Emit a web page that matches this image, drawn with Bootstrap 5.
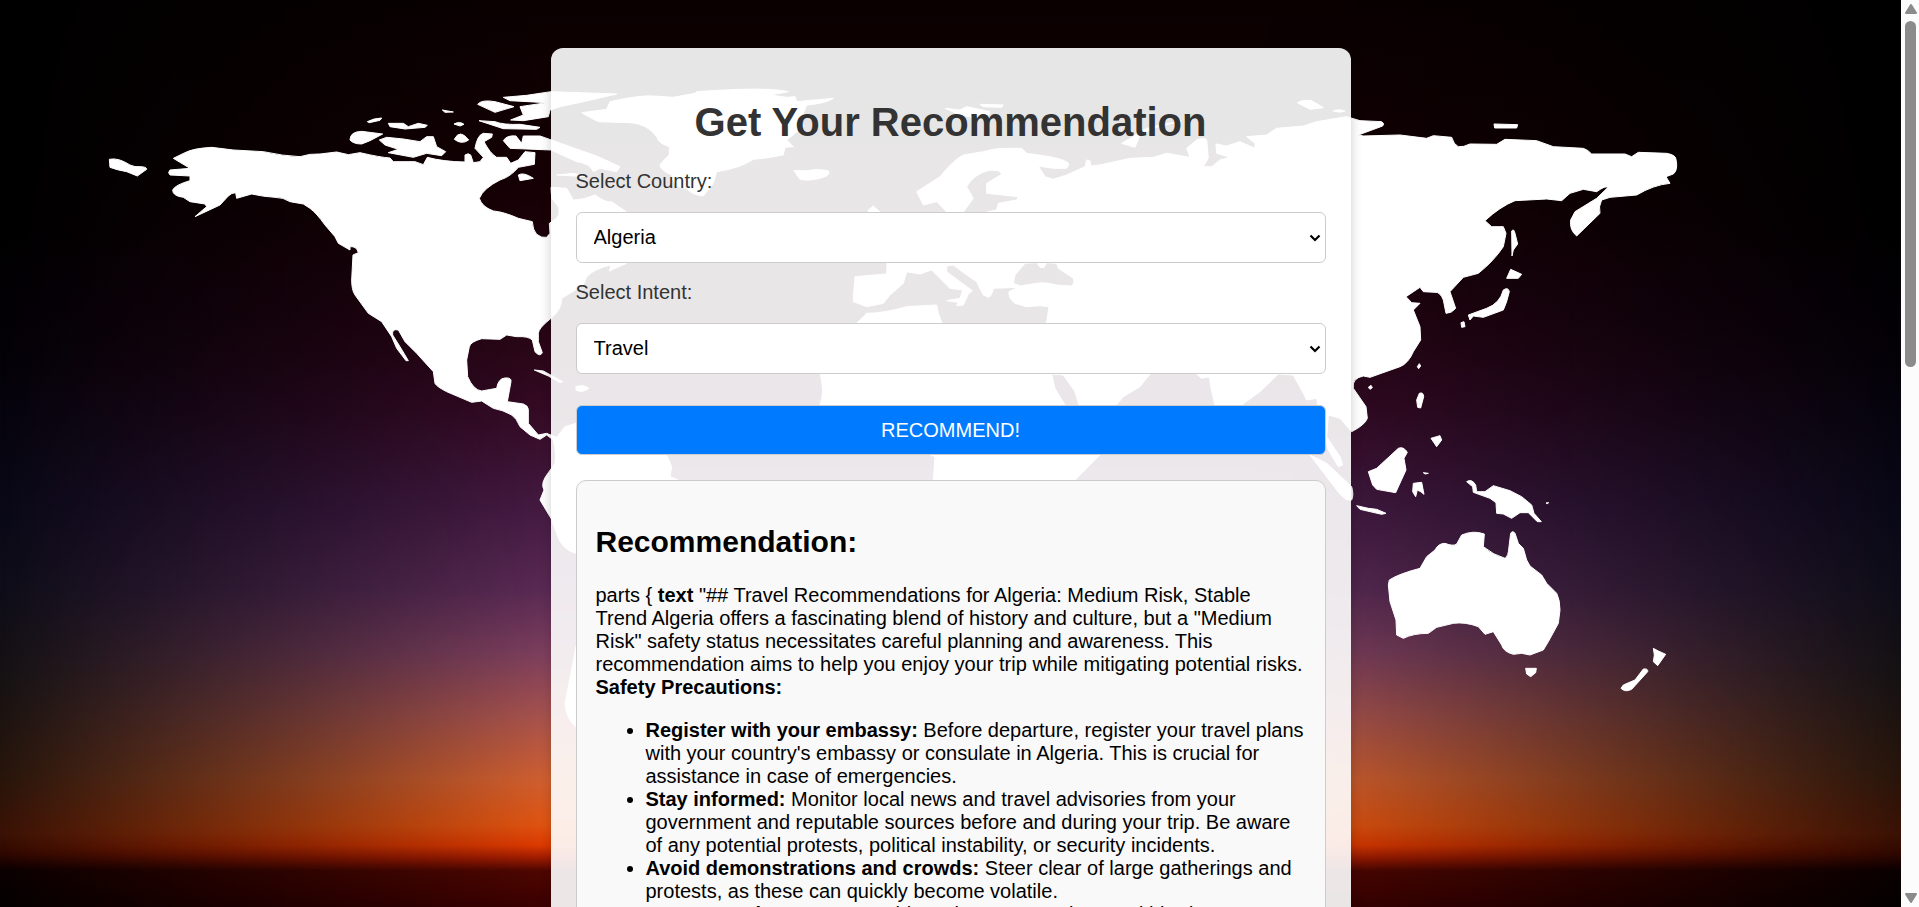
<!DOCTYPE html>
<html lang="en">
<head>
<meta charset="utf-8">
<meta name="viewport" content="width=device-width, initial-scale=1">
<title>Get Your Recommendation</title>
<link href="https://cdn.jsdelivr.net/npm/bootstrap@5.3.0/dist/css/bootstrap.min.css" rel="stylesheet">
<script src="https://cdn.jsdelivr.net/npm/bootstrap@5.3.0/dist/js/bootstrap.bundle.min.js"></script>
<style>
  body { font-family: "Liberation Sans", Arial, sans-serif; font-size: 20px; line-height: 23px; color: #000; background: #000; }
  .scroller { scrollbar-width: none; }
  .scroller::-webkit-scrollbar { display: none; }
  .panel { max-width: 800px; padding: 25px; background: rgba(255,255,255,.9); border-radius: 12px; box-shadow: 0 0 12px rgba(0,0,0,.2); }
  .panel h1 { font-size: 40px; line-height: 46px; font-weight: 700; color: #333; margin: 26px 0 25px; }
  .panel label { color: #333; margin-bottom: 19px; }
  .field { height: 51px; padding: 0 17px; border: 1px solid #ccc; border-radius: 6px; color: #000; margin-bottom: 18px; appearance: none;
    background: #fff url("data:image/svg+xml,%3Csvg xmlns='http://www.w3.org/2000/svg' viewBox='0 0 12 8'%3E%3Cpath d='M1.5 1.5L6 6L10.5 1.5' fill='none' stroke='%23000' stroke-width='2.2'/%3E%3C/svg%3E") no-repeat right 4px center / 12px 8px; }
  .go { height: 50px; border: 1px solid #ccc; border-radius: 6px; background: #007bff; color: #fff; margin: 31px 0 25px; }
  .result { padding: 19px; background: #f9f9f9; border: 1px solid #ccc; border-radius: 10px; }
  .result h2 { font-size: 30px; line-height: 34px; font-weight: 700; margin: 25px 0; }
  .result p { margin-bottom: 20px; }
  .result ul { padding-left: 50px; }
  .rail { width: 18px; padding: 4px 3px 4px 4px; background: #fcfcfc; }
  .thumb { width: 11px; height: 38.2vh; margin-top: 7px; border-radius: 6px; background: #8b8b8b; }
</style>
</head>
<body>
<div class="d-flex vh-100 overflow-hidden">
  <div class="position-relative flex-grow-1 overflow-hidden">
    <svg class="position-absolute top-0 start-0 w-100 h-100" viewBox="0 0 1901 907" preserveAspectRatio="xMidYMid slice" aria-hidden="true">
      <defs>
        <linearGradient id="core" x1="0" y1="0" x2="0" y2="1">
          <stop offset="0" stop-color="#0a0000"/><stop offset=".2" stop-color="#160004"/>
          <stop offset=".35" stop-color="#260412"/><stop offset=".45" stop-color="#350a24"/>
          <stop offset=".56" stop-color="#451a42"/><stop offset=".65" stop-color="#5b2a55"/>
          <stop offset=".72" stop-color="#7e3f5e"/><stop offset=".79" stop-color="#a9534e"/>
          <stop offset=".86" stop-color="#d26030"/><stop offset=".91" stop-color="#e25410"/>
          <stop offset=".932" stop-color="#df3a00"/><stop offset=".946" stop-color="#a01c00"/>
          <stop offset=".96" stop-color="#500600"/><stop offset="1" stop-color="#3c0000"/>
        </linearGradient>
        <linearGradient id="side" x1="0" y1="0" x2="0" y2="1">
          <stop offset="0" stop-color="#000"/><stop offset=".25" stop-color="#010001"/>
          <stop offset=".4" stop-color="#040208"/><stop offset=".55" stop-color="#090816"/>
          <stop offset=".65" stop-color="#0e0d18"/><stop offset=".75" stop-color="#161213"/>
          <stop offset=".85" stop-color="#26150c"/><stop offset=".92" stop-color="#3a1205"/>
          <stop offset=".94" stop-color="#300800"/><stop offset=".96" stop-color="#0a0000"/>
          <stop offset="1" stop-color="#050000"/>
        </linearGradient>
        <linearGradient id="fade" x1="0" y1="0" x2="1" y2="0">
          <stop offset="0" stop-color="#000"/><stop offset=".06" stop-color="#333"/>
          <stop offset=".16" stop-color="#888"/><stop offset=".29" stop-color="#fff"/>
          <stop offset=".65" stop-color="#fff"/><stop offset=".72" stop-color="#d5d5d5"/>
          <stop offset=".84" stop-color="#777"/><stop offset=".93" stop-color="#333"/><stop offset="1" stop-color="#000"/>
        </linearGradient>
        <mask id="glow"><rect width="1901" height="907" fill="url(#fade)"/></mask>
      </defs>
      <rect width="1901" height="907" fill="url(#side)"/>
      <rect width="1901" height="907" fill="url(#core)" mask="url(#glow)"/>

      <g fill="#fff" stroke="#fff" stroke-width="3" stroke-linejoin="round" fill-rule="evenodd">
        <!-- Americas -->
        <g transform="translate(90 70) scale(.33333)">
          <path d="M250 265L285 248Q310 235 365 232L430 240L520 245Q580 258 630 260Q660 250 690 252L740 246L775 254L810 248Q870 262 900 264L910 275L975 275L1000 284L1012 262Q1060 275 1125 276L1125 255Q1135 248 1142 255L1150 278L1170 275L1180 262L1155 235Q1162 195 1180 190L1207 192L1205 202L1182 215Q1200 250 1220 262L1250 262L1262 280L1285 270L1305 245L1335 248L1333 283L1285 292Q1262 320 1230 330Q1180 355 1168 385Q1175 410 1210 423Q1240 425 1285 445L1327 455Q1328 480 1340 493Q1355 505 1370 502L1380 490L1378 460L1400 445Q1412 430 1405 410L1385 385L1383 352L1430 355L1450 390Q1480 390 1515 375Q1550 400 1565 395L1610 426L1610 580L1558 603L1563 585Q1515 595 1490 620L1480 645L1415 685Q1415 720 1383 745Q1345 775 1345 790L1345 815L1357 848Q1350 862 1335 845L1327 810Q1315 798 1280 800L1250 795L1230 808L1175 806Q1142 815 1138 830L1130 870L1133 920Q1150 960 1175 963L1220 955Q1225 925 1245 924Q1265 922 1263 935L1252 995L1300 1002Q1315 1008 1315 1018L1315 1060L1345 1095L1370 1090L1400 1102L1425 1070L1458 1060L1730 1060L1730 1155L1745 1190L1740 1220L1765 1230L1800 1500L1458 1450Q1415 1440 1400 1390L1383 1345L1350 1290L1362 1260Q1350 1240 1375 1208L1395 1180Q1400 1150 1390 1110L1370 1095L1350 1108L1320 1095L1290 1070Q1280 1045 1265 1035Q1240 1020 1210 1015L1175 993L1145 997L1070 965Q1040 950 1035 940L1030 905L980 850L945 815L925 780Q905 775 908 795L930 830L955 872L948 872L920 835L905 800L875 755L835 730L795 675Q785 660 785 630L789 555L805 548Q800 528 780 530L780 540L745 520L735 500L705 465Q680 430 660 415L640 402L600 395Q580 382 555 382Q520 380 485 372L440 385L437 368Q425 368 415 378L390 405L315 440L350 410L345 402L300 395L280 382Q248 378 248 360Q255 345 300 332L300 318L240 315Q232 308 240 300L300 295Z"/>
          <path d="M58 268Q85 262 120 285Q135 292 150 290Q170 290 170 298L142 318L110 305Q80 300 60 292Z"/>
          <path d="M832 155Q850 145 875 144L870 151L838 158ZM895 160L940 160L955 170L985 160L1012 166L1005 172L945 177L900 170ZM780 210Q780 185 815 184L878 192L840 212L815 222Q790 222 780 210ZM868 210L890 202L940 207L990 215L1010 200L1030 200L1040 230L1067 245L1055 257L1010 250L970 262L895 248L925 238L885 225ZM1057 120L1090 126L1065 127ZM1092 162Q1110 153 1122 163L1110 168ZM1093 208Q1110 175 1136 210Q1115 225 1093 208Z"/>
          <path d="M1163 103Q1175 88 1215 95L1272 110L1215 127ZM1240 82L1310 76L1383 65L1580 72L1480 95L1410 110L1380 120L1375 140L1300 152L1262 150L1300 135L1290 110L1370 98L1260 92ZM1167 152L1215 155Q1240 165 1290 163L1350 172L1340 178L1240 176ZM1240 212Q1250 195 1278 198L1295 220L1300 198L1350 198L1390 212L1440 230L1520 258L1590 290L1580 305L1530 295L1510 305Q1500 280 1460 275L1383 240L1260 235ZM1285 315Q1300 305 1330 325L1290 332ZM1400 315L1450 310L1490 320Z"/>
          <path d="M1333 900L1360 903L1418 935L1410 938L1375 918ZM1458 950Q1480 942 1497 955Q1475 970 1458 960ZM1458 1730L1445 1800L1425 1900Q1430 1950 1458 1970Z"/>
        </g>
        <!-- Greenland and Iceland -->
        <g transform="translate(540 40) scale(.33333)">
          <path d="M125 218L200 208L210 185Q300 165 340 168L400 172L465 160L470 155Q540 150 600 148Q700 145 745 155L690 165L740 172L765 170L770 185L880 175Q860 190 800 195Q780 240 790 260L740 300L760 320L735 322L730 345Q680 355 640 358Q600 385 530 395L520 430L490 468Q455 465 440 445Q400 445 395 405Q360 390 360 375Q380 350 388 345L388 320Q355 310 350 290Q320 250 270 248L175 245L155 235Z"/>
          <path d="M762 392L800 392Q830 385 865 392Q872 405 850 412Q810 425 780 418Z"/>
          <path d="M985 510L1000 498L1022 518L985 520Z"/>
        </g>
        <!-- Europe, Africa and Asia, with the inner seas cut out -->
        <g transform="translate(940 40) scale(.33333)">
          <path d="M0 410Q40 360 70 345L130 335Q160 325 200 325L245 325L260 340L330 350Q380 360 387 372L380 385L340 385L295 378L315 410L340 418L380 405L435 380L440 360L450 362L452 378L480 375L570 355L640 352L680 340L750 352L740 325L770 300Q795 290 800 300L805 355L790 380L815 380L840 360L870 352L830 340L828 312L860 318L900 305L945 325L945 310L920 290L980 285L1010 265L1090 258L1130 245L1220 230L1260 242L1325 245Q1335 250 1328 258L1255 285L1270 288L1380 285L1460 295L1480 287L1535 292Q1542 315 1555 320Q1570 322 1590 312L1670 313L1695 298L1790 302L1840 320L1930 325Q1945 330 1955 342L2055 342L2075 350L2095 337L2180 340Q2208 345 2208 358Q2215 390 2200 402L2178 410L2190 430Q2140 435 2090 465L2010 472L1985 480Q1975 500 1980 520L1910 588Q1888 570 1892 540L1905 515L1970 475L2003 443Q1998 435 1970 455L1930 448L1890 460L1865 482L1820 477L1725 482Q1680 500 1635 542L1655 560L1690 560L1698 580L1690 620Q1660 665 1615 700L1570 712L1530 755L1547 805Q1535 820 1518 820L1510 780Q1500 755 1485 757L1450 755L1440 742L1398 770L1415 788L1440 790L1420 810L1440 860L1442 900L1420 935Q1405 970 1380 980L1290 1012L1270 1008Q1235 1015 1240 1045L1278 1100L1282 1135Q1275 1155 1235 1175L1200 1135L1165 1125L1160 1190L1200 1250L1208 1275L1195 1280L1165 1230L1145 1150L1130 1075L1100 1080L1090 1060L1060 1005L1015 1002L960 1055L905 1095L860 1180L825 1095L815 1055L808 1010L785 1015L770 1002L760 990L640 990L600 1040L550 1070L500 1130L500 1220L480 1245L405 1320L380 1500L-30 1500L-20 1320L-15 1250L-50 1235L-300 1200L-360 1095Q-345 1055 -360 1000L-250 850L-220 820Q-170 820 -100 800L-10 795L-5 820L5 848L50 870L310 870L320 845L327 800L300 797L260 800L225 790Q205 775 207 755L235 742L160 745Q155 770 145 772L130 765L110 725L80 705L40 675L20 678L20 695L60 725L97 752L85 762L70 795L50 797L55 787L20 782L60 775L68 750L30 745L0 715L-25 690L-60 702L-100 695L-110 730L-150 765L-170 790L-220 800L-260 785L-260 765L-255 710L-160 702L-157 600L20 560L20 516L-10 485L-50 495L-70 455ZM70 516L100 475L80 440Q100 405 140 393Q180 385 185 403L140 430L140 460L235 470L230 480L175 490L170 510L140 516L140 560L60 560ZM220 730L225 705L255 670L290 668L300 682L312 682L320 668L350 670L355 685L400 715Q405 730 395 738L350 735Q310 725 290 730L240 738ZM335 1002L345 1045L375 1095L400 1140L430 1140L417 1095L405 1055L370 1005Z"/>
          <path d="M15 205L60 210L80 200L150 215L145 226L100 232L60 225ZM120 193L190 195L185 202L130 200ZM545 310L580 290Q600 262 700 248L725 242L640 265L600 285L585 322ZM1072 188Q1090 178 1115 182L1150 203L1110 208ZM1180 213Q1195 205 1215 213Q1200 220 1180 213ZM1662 252L1733 254L1730 264L1664 264Z"/>
          <path d="M1715 573Q1722 565 1725 580L1733 612L1720 630L1716 648ZM1712 688L1745 703L1735 715L1700 715ZM1690 750Q1705 740 1708 755Q1700 790 1690 810L1630 832L1600 828L1590 840L1585 825L1640 805Q1680 790 1690 750ZM1563 848L1572 845L1575 860L1565 862Z"/>
          <path d="M1110 1245L1160 1270L1235 1340Q1242 1365 1235 1380Q1215 1385 1190 1350Z"/>
        </g>
        <!-- South-east Asia and Oceania -->
        <g transform="translate(1330 320) scale(.33333)">
          <path d="M262 140L268 131L272 138L266 146ZM115 202L123 196L127 203L120 208ZM268 220Q280 215 281 230L272 264L263 262L260 240ZM303 355L330 347L335 360L320 380ZM115 455L140 445L205 385Q220 378 232 397L222 415L228 450L197 518L140 508L128 495ZM250 490L275 487L282 523L272 515L262 510L257 530L248 515ZM280 458L295 460L285 462ZM80 557L115 565L140 568L168 580L155 583L90 568ZM648 549L656 548L652 551ZM410 485Q425 475 437 495L440 515L465 515L490 497L540 512L575 530L605 555L612 580L634 605L622 605L595 578L570 578L545 595L520 582L500 580L498 548L480 535L430 517L428 500Z"/>
          <path d="M175 795L178 780Q205 762 270 745L290 710L315 690Q325 670 345 670Q370 680 380 672L395 645Q430 630 463 642L460 680Q490 705 525 715Q535 710 537 680L542 640Q548 630 555 640L565 670L580 685L590 720L600 738L635 765L650 790L680 820Q690 840 690 870L685 910L655 965L640 990L600 1005L575 1000L550 1003Q520 995 515 975L490 935L465 943L445 920Q405 905 370 910L320 922L295 940Q250 940 220 955L200 945L198 900L180 845ZM587 1045L619 1045L617 1058L602 1070L590 1062ZM970 985L985 993L1007 1003L983 1037L970 1025L973 1005ZM940 1047Q955 1045 953 1055L905 1108Q885 1118 873 1105L880 1095L915 1080Z"/>
        </g>
      </g>
    </svg>

    <main class="scroller position-relative h-100 overflow-auto py-5">
      <div class="panel mx-auto">
        <h1 class="text-center">Get Your Recommendation</h1>
        <form>
          <label class="d-block" for="country">Select Country:</label>
          <select class="field d-block w-100" id="country"><option>Algeria</option></select>
          <label class="d-block" for="intent">Select Intent:</label>
          <select class="field d-block w-100" id="intent"><option>Travel</option></select>
          <button class="go d-block w-100" type="button">RECOMMEND!</button>
        </form>
        <section class="result">
          <h2>Recommendation:</h2>
          <p>parts { <strong>text</strong> "## Travel Recommendations for Algeria: Medium Risk, Stable Trend Algeria offers a fascinating blend of history and culture, but a "Medium Risk" safety status necessitates careful planning and awareness. This recommendation aims to help you enjoy your trip while mitigating potential risks. <strong>Safety Precautions:</strong></p>
          <ul>
            <li><strong>Register with your embassy:</strong> Before departure, register your travel plans with your country's embassy or consulate in Algeria. This is crucial for assistance in case of emergencies.</li>
            <li><strong>Stay informed:</strong> Monitor local news and travel advisories from your government and reputable sources before and during your trip. Be aware of any potential protests, political instability, or security incidents.</li>
            <li><strong>Avoid demonstrations and crowds:</strong> Steer clear of large gatherings and protests, as these can quickly become volatile.</li>
            <li><strong>Transportation:</strong> Use reputable taxis or car services and hired transportation.</li>
          </ul>
        </section>
      </div>
    </main>
  </div>

  <div class="rail d-flex flex-column align-items-center flex-shrink-0" aria-hidden="true">
    <svg width="12" height="10" viewBox="0 0 12 10"><path d="M6 1L11 9H1Z" fill="#8b8b8b" stroke="#8b8b8b" stroke-width="2" stroke-linejoin="round"/></svg>
    <div class="thumb"></div>
    <svg class="mt-auto" width="12" height="10" viewBox="0 0 12 10"><path d="M6 9L11 1H1Z" fill="#8b8b8b" stroke="#8b8b8b" stroke-width="2" stroke-linejoin="round"/></svg>
  </div>
</div>
</body>
</html>
